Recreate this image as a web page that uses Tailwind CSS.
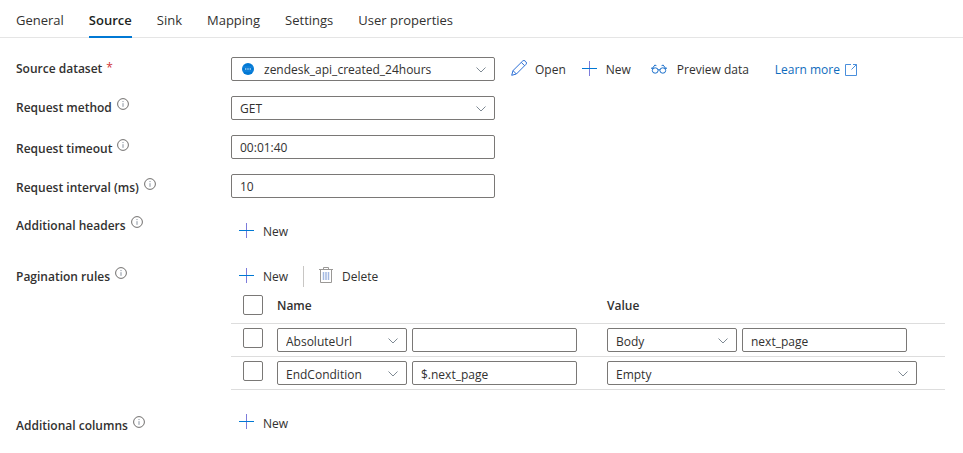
<!DOCTYPE html>
<html lang="en">
<head>
<meta charset="utf-8">
<meta name="viewport" content="width=device-width, initial-scale=1">
<title>Source</title>
<script src="https://cdn.jsdelivr.net/npm/@tailwindcss/browser@4"></script>
</head>
<body class="bg-white font-['Open_Sans','Noto_Sans',sans-serif] text-[12px] text-[#323130]">
<svg class="hidden" aria-hidden="true">
  <symbol id="chevron" viewBox="0 0 10 6"><path d="M.5.5 5 5 9.5.5" fill="none" stroke="#7f8a94"/></symbol>
  <symbol id="plus" viewBox="0 0 15 15"><path d="M7.5 0v15" stroke="#7c7bdb" fill="none"/><path d="M0 7.5h15" stroke="#0078d4" fill="none"/></symbol>
  <symbol id="info" viewBox="0 0 12 12"><circle cx="6" cy="6" r="5.4" fill="none" stroke="#605e5c" stroke-width=".9"/><path d="M6 5.2v3.6M6 3v1.1" stroke="#7a8794" stroke-width=".9"/></symbol>
</svg>

<nav class="flex h-[38px] gap-[25px] border-b border-[#e5e5e5] px-4 text-[13px]">
  <a href="#" class="flex h-[38px] items-center pt-1">General</a>
  <a href="#" aria-current="page" class="flex h-[38px] items-center border-b-2 border-[#0078d4] pt-1.5 font-semibold text-[#201f1e]">Source</a>
  <a href="#" class="flex h-[38px] items-center pt-1">Sink</a>
  <a href="#" class="flex h-[38px] items-center pt-1">Mapping</a>
  <a href="#" class="flex h-[38px] items-center pt-1">Settings</a>
  <a href="#" class="flex h-[38px] items-center pt-1">User properties</a>
</nav>

<form class="flex flex-col gap-[15px] pt-[19px] pr-[18px] pl-4">
  <div class="grid grid-cols-[215px_1fr]">
    <label for="dataset" class="flex h-6 items-center gap-1 font-semibold">Source dataset <span class="pb-0.5 font-normal text-[#d13438]">*</span></label>
    <div class="flex items-center">
      <div class="relative w-[264px]">
        <select id="dataset" class="block h-6 w-full appearance-none rounded-[2px] border border-[#7a7876] bg-white pt-0.5 pr-6 pl-8"><option>zendesk_api_created_24hours</option></select>
        <svg class="pointer-events-none absolute top-1.5 left-[11px] size-3" viewBox="0 0 12 12"><circle cx="6" cy="6" r="6" fill="#0078d4"/><path d="M.8 4h10.4M.8 8h10.4" stroke="#3c9be8" stroke-width=".5"/><path d="M3 6h1.4M5.3 6h1.4M7.6 6H9" stroke="#fff"/></svg>
        <svg class="pointer-events-none absolute top-2.5 right-[9px] h-1.5 w-2.5"><use href="#chevron"/></svg>
      </div>
      <button type="button" class="ml-4 flex items-center gap-2 pt-0.5"><svg class="mb-1 size-4" viewBox="0 0 16 16" fill="none" stroke="#2b6fd6"><path d="M.7 15.300 2 10.600 11.700 1a1.700 1.700 0 0 1 2.400 0l.9.900a1.700 1.700 0 0 1 0 2.400L5.400 14z"/><path d="M2 10.600 5.400 14M10.300 2.400l3.300 3.300"/></svg>Open</button>
      <button type="button" class="ml-4 flex items-center gap-[9px] pt-0.5"><svg class="mb-1 size-[15px]"><use href="#plus"/></svg>New</button>
      <button type="button" class="ml-5 flex items-center gap-[10px] pt-0.5"><svg class="mb-0.5 h-2.5 w-4" viewBox="0 0 16 10" fill="none" stroke="#1a6fcb"><ellipse cx="4.200" cy="6.500" rx="2.900" ry="2.700"/><ellipse cx="11.800" cy="6.500" rx="2.900" ry="2.700"/><path d="M7 6q1-.8 2 0M0 4.200h2.200M13.800 4.200H16M1.300 4.500 3.800 1.100l1.600.5M14.700 4.500 12.200 1.100l-1.600.5"/></svg>Preview data</button>
      <a href="#" class="ml-[26px] flex items-center gap-[5px] pt-0.5 text-[#0f6cbd]">Learn more <svg class="size-3" viewBox="0 0 12 12" fill="none" stroke="#4a8fdc"><path d="M6 .5H.5v11h11V.5H8M11.500.5 6.500 5.500"/></svg></a>
    </div>
  </div>

  <div class="grid grid-cols-[215px_1fr]">
    <label for="method" class="flex h-6 items-center gap-[5px] font-semibold">Request method <svg class="mb-2 size-3"><use href="#info"/></svg></label>
    <div class="relative w-[264px]">
      <select id="method" class="block h-6 w-full appearance-none rounded-[2px] border border-[#7a7876] bg-white px-2 pt-0.5"><option>GET</option></select>
      <svg class="pointer-events-none absolute top-2.5 right-[9px] h-1.5 w-2.5"><use href="#chevron"/></svg>
    </div>
  </div>

  <div class="grid grid-cols-[215px_1fr]">
    <label for="timeout" class="flex h-6 items-center gap-[5px] pt-[3px] font-semibold">Request timeout <svg class="mb-2 size-3"><use href="#info"/></svg></label>
    <input id="timeout" type="text" value="00:01:40" class="h-6 w-[264px] rounded-[2px] border border-[#7a7876] px-2">
  </div>

  <div class="grid grid-cols-[215px_1fr]">
    <label for="interval" class="flex h-6 items-center gap-[5px] pt-[3px] font-semibold">Request interval (ms) <svg class="mb-2 size-3"><use href="#info"/></svg></label>
    <input id="interval" type="text" value="10" class="h-6 w-[264px] rounded-[2px] border border-[#7a7876] px-2">
  </div>

  <div class="grid grid-cols-[215px_1fr]">
    <span class="flex h-6 items-center gap-[5px] pt-px font-semibold">Additional headers <svg class="mb-2 size-3"><use href="#info"/></svg></span>
    <button type="button" class="flex h-9 items-center gap-[9px] justify-self-start px-2 pt-0.5"><svg class="mb-1 size-[15px]"><use href="#plus"/></svg>New</button>
  </div>

  <div class="grid grid-cols-[215px_1fr]">
    <span class="flex h-6 items-center gap-[5px] pt-px font-semibold">Pagination rules <svg class="mb-2 size-3"><use href="#info"/></svg></span>
    <div>
      <div class="flex h-6 items-center pl-2">
        <button type="button" class="flex items-center gap-[9px] pt-0.5"><svg class="mb-1 size-[15px]"><use href="#plus"/></svg>New</button>
        <span class="ml-[15px] h-[21px] w-px bg-[#c8c6c4]"></span>
        <button type="button" class="ml-[15px] flex items-center gap-[9px] pt-0.5"><svg class="mb-1 h-4 w-3.5" viewBox="0 0 14 16" fill="none" stroke="#9a9896"><path d="M0 2.500h14M4.500 2.500v-2h5v2M1.500 2.500v13h11v-13"/><path d="M4.500 5v8M7 5v8M9.500 5v8" stroke="#a3b9e2" stroke-width="1.500"/></svg>Delete</button>
      </div>
      <table class="w-full table-fixed border-collapse text-left">
        <thead>
          <tr class="h-[35px] border-b border-[#dddddd]">
            <th class="w-[46px] pl-3"><input type="checkbox" aria-label="Select all" class="block size-5 appearance-none rounded-[2px] border border-[#7a7876]"></th>
            <th class="w-[330px] pt-0.5 font-semibold">Name</th>
            <th class="pt-0.5 font-semibold">Value</th>
          </tr>
        </thead>
        <tbody>
          <tr class="h-[33px] border-b border-[#dddddd]">
            <td class="pb-1 pl-3"><input type="checkbox" aria-label="Select AbsoluteUrl" class="block size-5 appearance-none rounded-[2px] border border-[#7a7876]"></td>
            <td><div class="flex gap-[5px]">
              <div class="relative w-[130px]"><select aria-label="Rule name" class="block h-6 w-full appearance-none rounded-[2px] border border-[#7a7876] bg-white px-2 pt-1"><option>AbsoluteUrl</option></select><svg class="pointer-events-none absolute top-2.5 right-[9px] h-1.5 w-2.5"><use href="#chevron"/></svg></div>
              <input type="text" aria-label="Name key" class="h-6 w-[165px] rounded-[2px] border border-[#7a7876] px-2 pt-[3px]">
            </div></td>
            <td><div class="flex gap-[5px]">
              <div class="relative w-[130px]"><select aria-label="Value type" class="block h-6 w-full appearance-none rounded-[2px] border border-[#7a7876] bg-white px-2 pt-1"><option>Body</option></select><svg class="pointer-events-none absolute top-2.5 right-[9px] h-1.5 w-2.5"><use href="#chevron"/></svg></div>
              <input type="text" aria-label="Value" value="next_page" class="h-6 w-[165px] rounded-[2px] border border-[#7a7876] px-2 pt-[3px]">
            </div></td>
          </tr>
          <tr class="h-[33px] border-b border-[#dddddd]">
            <td class="pb-1 pl-3"><input type="checkbox" aria-label="Select EndCondition" class="block size-5 appearance-none rounded-[2px] border border-[#7a7876]"></td>
            <td><div class="flex gap-[5px]">
              <div class="relative w-[130px]"><select aria-label="Rule name" class="block h-6 w-full appearance-none rounded-[2px] border border-[#7a7876] bg-white px-2 pt-1"><option>EndCondition</option></select><svg class="pointer-events-none absolute top-2.5 right-[9px] h-1.5 w-2.5"><use href="#chevron"/></svg></div>
              <input type="text" aria-label="Name key" value="$.next_page" class="h-6 w-[165px] rounded-[2px] border border-[#7a7876] px-2 pt-[3px]">
            </div></td>
            <td>
              <div class="relative w-[310px]"><select aria-label="Value type" class="block h-6 w-full appearance-none rounded-[2px] border border-[#7a7876] bg-white px-2 pt-1"><option>Empty</option></select><svg class="pointer-events-none absolute top-2.5 right-[9px] h-1.5 w-2.5"><use href="#chevron"/></svg></div>
            </td>
          </tr>
        </tbody>
      </table>
    </div>
  </div>

  <div class="grid grid-cols-[215px_1fr] pt-[7px]">
    <span class="flex h-6 items-center gap-[5px] pt-1 font-semibold">Additional columns <svg class="mb-2 size-3"><use href="#info"/></svg></span>
    <button type="button" class="flex h-6 items-center gap-[9px] justify-self-start px-2"><svg class="mb-1 size-[15px]"><use href="#plus"/></svg>New</button>
  </div>
</form>
</body>
</html>
